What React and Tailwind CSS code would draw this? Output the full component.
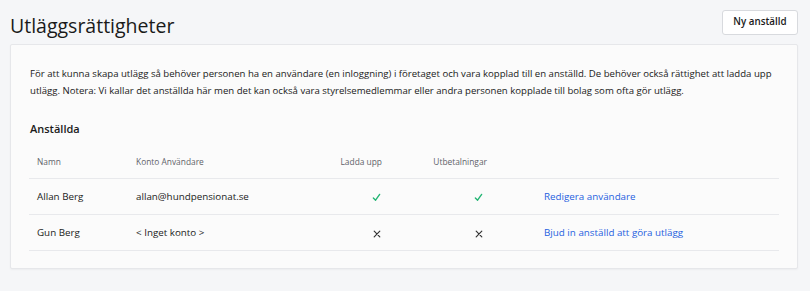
const employees = [
    { name: 'Allan Berg', account: 'allan@hundpensionat.se', upload: true, payout: true, action: 'Redigera användare' },
    { name: 'Gun Berg', account: '< Inget konto >', upload: false, payout: false, action: 'Bjud in anställd att göra utlägg' },
]

const Mark = ({ ok }) =>
    ok ? (
        <svg width="9" height="9" viewBox="0 0 10 10" className="inline-block">
            <path d="M1.5 5.5 L4 8 L8.5 1.5" fill="none" stroke="#22b573" strokeWidth="1.5" strokeLinecap="round" strokeLinejoin="round" />
        </svg>
    ) : (
        <svg width="8" height="8" viewBox="0 0 10 10" className="inline-block">
            <path d="M1.5 1.5 L8.5 8.5 M8.5 1.5 L1.5 8.5" fill="none" stroke="#333" strokeWidth="1.5" strokeLinecap="round" />
        </svg>
    )

const App = () => {
    return (
        <div className="min-h-screen bg-[#f5f6f8] pl-[10px] pr-[12px] pt-[10px] font-['Open_Sans',sans-serif] text-[#1a1a1a]">
            <div className="flex justify-between items-start h-[34px]">
                <h1 className="text-[19.5px] leading-[32px] text-[#1a1a1a]">Utläggsrättigheter</h1>
                <button
                    type="button"
                    className="h-[25px] w-[76px] bg-white border border-[#d8dade] rounded-[3px] text-[9.8px] font-semibold text-[#1a1a1a]"
                >
                    Ny anställd
                </button>
            </div>

            <div className="bg-[#fbfbfb] border border-[#e6e7ea] rounded-[2px] shadow-[0_1px_2px_rgba(0,0,0,0.04)] px-[18px] pt-[20px] pb-[17px]">
                <p className="text-[9.6px] leading-[17px] text-[#1a1a1a] pl-[1px] mr-[-6px]">
                    För att kunna skapa utlägg så behöver personen ha en användare (en inloggning) i företaget och vara kopplad till en anställd. De behöver också rättighet att ladda upp utlägg. Notera: Vi kallar det anställda här men det kan också vara styrelsemedlemmar eller andra personen kopplade till bolag som ofta gör utlägg.
                </p>

                <h2 className="mt-[20px] text-[11px] leading-[20px] font-semibold text-[#1a1a1a] pl-[1px]">Anställda</h2>

                <div className="mt-[7px]">
                    <div className="grid grid-cols-[99px_200px_62px_101px_1fr] h-[33px] items-center text-[8.4px] text-[#5f636a] border-b border-[#e8e9ec]">
                        <div className="pl-[8px]">Namn</div>
                        <div className="pl-[8px]">Konto Användare</div>
                        <div className="text-right pr-[8px]">Ladda upp</div>
                        <div className="text-right pr-[4px]">Utbetalningar</div>
                        <div />
                    </div>
                    {employees.map((e) => (
                        <div
                            key={e.name}
                            className="grid grid-cols-[99px_200px_62px_101px_1fr] h-[36px] pt-[2px] items-center text-[9.8px] text-[#1a1a1a] border-b border-[#e8e9ec]"
                        >
                            <div className="pl-[8px]">{e.name}</div>
                            <div className="pl-[8px]">{e.account}</div>
                            <div className="text-right pr-[9px]"><Mark ok={e.upload} /></div>
                            <div className="text-right pr-[8px]"><Mark ok={e.payout} /></div>
                            <div className="pl-[53px]">
                                <a href="#" className="text-[#1f5fe0]">{e.action}</a>
                            </div>
                        </div>
                    ))}
                </div>
            </div>
        </div>
    )
}

export default App
